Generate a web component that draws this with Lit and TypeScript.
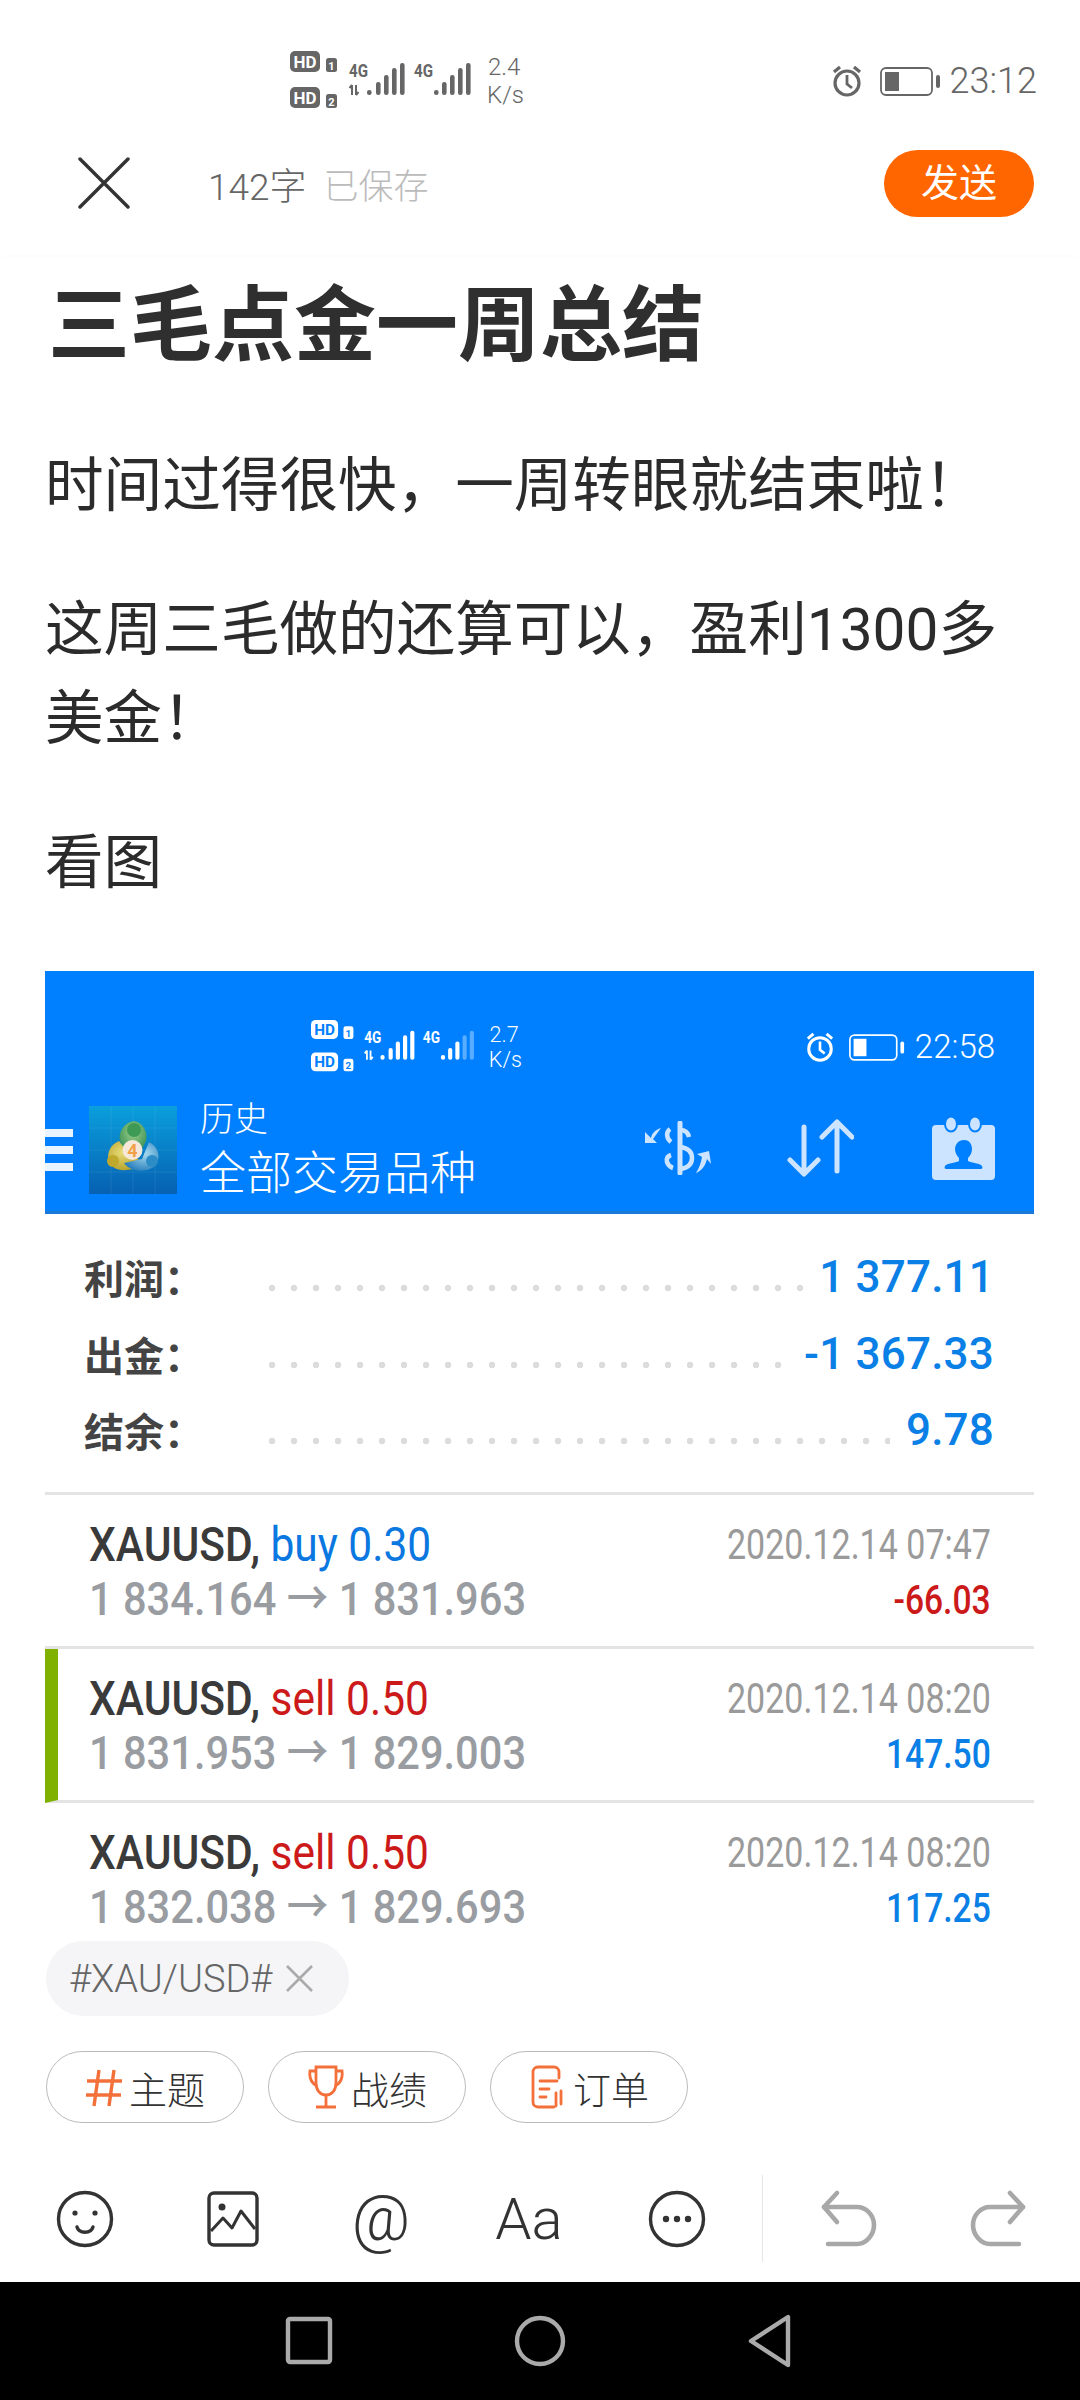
import { LitElement, html, css, svg } from "lit";
import { customElement } from "lit/decorators.js";

const hdBlock = (y: number, n: string, by: number) => svg`
  <rect x="0" y="${y}" width="30" height="21" rx="5" fill="currentColor"/>
  <text x="15" y="${y + 16.5}" text-anchor="middle" font-size="17" font-weight="700" textLength="23" lengthAdjust="spacingAndGlyphs" class="knock">HD</text>
  <rect x="36" y="${by}" width="11" height="14" rx="2.5" fill="currentColor"/>
  <text x="41.5" y="${by + 11.5}" text-anchor="middle" font-size="11" font-weight="700" class="knock">${n}</text>`;

const bars = (xs: number[], dim = 0) => {
  const tops = [40, 32, 25, 18, 13];
  return xs.map(
    (x, i) => svg`<rect x="${x}" y="${tops[i]}" width="4.6" height="${45 - tops[i]}" rx="2.2" fill="currentColor" opacity="${i >= 5 - dim ? 0.35 : 1}"/>`
  );
};

const cluster = (speed: string, dim: number) => svg`
  <svg class="cluster" viewBox="0 0 235 62" aria-hidden="true">
    ${hdBlock(1, "1", 8)}
    ${hdBlock(37, "2", 44)}
    <text x="59" y="27" font-size="18" font-weight="700" textLength="19" lengthAdjust="spacingAndGlyphs" fill="currentColor">4G</text>
    <path d="M62 35v10M59.5 38l2.5-3M66 35v10M66 45l2.5-3" stroke="currentColor" stroke-width="2" fill="none"/>
    ${bars([77, 86, 94, 102, 110])}
    <text x="124" y="27" font-size="18" font-weight="700" textLength="19" lengthAdjust="spacingAndGlyphs" fill="currentColor">4G</text>
    ${bars([144, 152, 160, 168, 176], dim)}
    <text x="198" y="25" font-size="24" font-weight="300" fill="currentColor">${speed}</text>
    <text x="197" y="53" font-size="24" font-weight="300" fill="currentColor">K/s</text>
  </svg>`;

const alarm = () => svg`
  <svg class="alarm" viewBox="0 0 32 34" aria-hidden="true" fill="none" stroke="currentColor">
    <circle cx="16" cy="19" r="12" stroke-width="3.2"/>
    <path d="M16 11v9l5 4" stroke-width="2.8"/>
    <path d="M3 8l6-5M29 8l-6-5" stroke-width="3.2"/>
  </svg>`;

const battery = () => svg`
  <svg class="battery" viewBox="0 0 61 29" aria-hidden="true" fill="none" stroke="currentColor">
    <rect x="1" y="1" width="51" height="27" rx="5" stroke-width="1.8"/>
    <rect x="5" y="5" width="14" height="19" fill="currentColor" stroke="none"/>
    <rect x="56" y="8" width="4" height="13" rx="2" fill="currentColor" stroke="none"/>
  </svg>`;

@customElement("app-root")
export class AppRoot extends LitElement {
  static styles = css`
    :host {
      display: flex;
      flex-direction: column;
      width: 1080px;
      height: 2400px;
      overflow: hidden;
      background: #fff;
      font-family: "Roboto", "Noto Sans CJK SC", sans-serif;
      color: #333;
    }
    .phone-status {
      display: flex;
      align-items: center;
      height: 112px;
      padding: 50px 43px 0 290px;
      box-sizing: border-box;
      color: #666;
      --knock: #fff;
      flex: none;
    }
    .phone-status .cluster { width: 235px; height: 62px; }
    .cluster { display: block; font-family: "Roboto", sans-serif; overflow: visible; }
    .knock { fill: var(--knock); }
    .status-right { display: flex; align-items: center; margin-left: auto; }
    .alarm { width: 32px; height: 34px; margin-right: 17px; }
    .battery { width: 61px; height: 29px; margin-right: 9px; }
    .time { font-weight: 300; font-size: 36px; line-height: 40px; }
    .appbar {
      display: flex;
      align-items: center;
      height: 143px;
      padding: 0 46px 0 78px;
      box-sizing: border-box;
      flex: none;
      padding-bottom: 0;
      box-shadow: 0 3px 6px rgba(0, 0, 0, 0.012);
    }
    .close { width: 52px; height: 52px; margin-right: 78px; margin-top: -1px; }
    .close path { stroke: #333; stroke-width: 3.4; stroke-linecap: round; fill: none; }
    .count { font-size: 37px; font-weight: 300; color: #666; margin-right: 17px; }
    .saved { font-size: 35px; font-weight: 300; color: #bbb; }
    .send {
      margin-left: auto;
      width: 150px;
      height: 67px;
      border-radius: 34px;
      background: #ff6600;
      color: #fff;
      font-size: 38px;
      line-height: 67px;
      text-align: center;
    }
    .main {
      flex: 1;
      min-height: 0;
      overflow: hidden;
      padding: 0 46px 0 45px;
    }
    h1 {
      margin: 30px 0 0 3px;
      font-size: 82px;
      line-height: 82px;
      font-weight: 700;
      color: #2f2f2f;
      letter-spacing: 0;
    }
    p {
      margin: 0 0 55px;
      font-size: 58.6px;
      line-height: 89px;
      color: #2b2b2b;
      font-weight: 400;
    }
    .body { margin-top: 75px; }
    .shot { margin-top: 63px; }
    .shot-head {
      background: #0080ff;
      border-bottom: 3px solid #1a78d8;
      color: #fff;
    }
    .shot-status {
      display: flex;
      align-items: center;
      padding: 48px 39px 0 266px;
      height: 56px;
      box-sizing: content-box;
      --knock: #0080ff;
      margin-bottom: 31px;
    }
    .shot-status .cluster { width: 212px; height: 56px; }
    .shot-status .alarm { width: 30px; height: 32px; margin-right: 14px; }
    .shot-status .battery { width: 56px; height: 27px; margin-right: 10px; }
    .shot-status .time { font-size: 33px; }
    .shot-bar {
      display: flex;
      align-items: center;
      height: 88px;
      padding: 0 39px 17px 0;
    }
    .burger { display: flex; flex-direction: column; gap: 9px; width: 28px; margin-right: 16px; }
    .burger i { display: block; height: 8px; background: #e8f4ff; }
    .logo { width: 88px; height: 88px; margin-right: 23px; flex: none; display: block; }
    .titles { display: flex; flex-direction: column; margin-top: -8px; }
    .t1 { font-size: 34px; line-height: 54px; font-weight: 300; }
    .t2 { font-size: 46px; line-height: 54px; font-weight: 300; }
    .actions { display: flex; align-items: center; margin-left: auto; margin-top: -4px; }
    .ic-dollar { width: 71px; height: 54px; margin-right: 74px; }
    .ic-arrows { width: 67px; height: 58px; margin-right: 78px; }
    .ic-contact { width: 63px; height: 64px; }
    .summary {
      padding: 25px 40px 23px 39px;
      border-bottom: 3px solid #e4e4e4;
    }
    .s-row { display: flex; align-items: center; height: 76.5px; }
    .s-label {
      font-size: 40px;
      font-weight: 700;
      color: #444;
      width: 185px;
      flex: none;
    }
    .leader {
      flex: 1;
      height: 8px;
      margin-top: 22px;
      margin-right: 16px;
      background: radial-gradient(circle at 3px 4px, #dcdcdc 3px, transparent 3.6px) left / 22px 8px repeat-x;
    }
    .s-val { font-size: 44px; font-weight: 500; color: #0a7fe6; letter-spacing: 0.2px; }
    .trade {
      display: flex;
      justify-content: space-between;
      height: 154px;
      box-sizing: border-box;
      padding: 23px 43px 0 44px;
      border-bottom: 3px solid #e4e4e4;
    }
    .trade.mark { border-left: 13px solid #80b000; padding-left: 31px; }
    .tl, .tr { display: flex; flex-direction: column; }
    .tr { align-items: flex-end; }
    .l1, .l2, .d1, .d2 { display: block; white-space: nowrap; line-height: 54px; }
    .l1, .l2 { transform: scaleX(0.885); transform-origin: left center; }
    .d1, .d2 { transform-origin: right center; }
    .l1 { font-size: 48px; font-weight: 400; }
    .sym { font-weight: 500; color: #3a3a3a; }
    .buy { color: #0a78e0; }
    .sell { color: #cc1a1a; }
    .l2 { font-size: 47px; font-weight: 500; color: #999ca1; }
    .d1 { font-size: 42px; color: #9a9a9a; transform: scaleX(0.81); }
    .d2 { font-size: 40px; font-weight: 500; transform: scaleX(0.84); margin-top: 2px; }
    .neg { color: #cc1a1a; }
    .pos { color: #0a7fe6; }
    .foot { flex: none; }
    .tag {
      display: inline-flex;
      align-items: center;
      height: 75px;
      box-sizing: border-box;
      margin-left: 46px;
      padding: 0 36px 0 23px;
      border-radius: 38px;
      background: #f5f5f7;
      font-size: 38px;
      font-weight: 300;
      color: #666;
      vertical-align: top;
    }
    .tag svg { width: 27px; height: 27px; margin-left: 14px; }
    .tag-row { height: 75px; }
    .chips { display: flex; gap: 24px; margin: 35px 0 0 46px; }
    .chip {
      display: flex;
      align-items: center;
      justify-content: center;
      gap: 6px;
      width: 198px;
      height: 72px;
      box-sizing: border-box;
      border: 1px solid #bbb;
      border-radius: 36px;
      font-size: 38px;
      font-weight: 300;
      color: #333;
    }
    .chip svg { width: 38px; height: 46px; flex: none; }
    .tools {
      display: flex;
      align-items: center;
      height: 87px;
      margin: 52px 0 20px 11px;
    }
    .slot { width: 148px; display: flex; justify-content: center; align-items: center; height: 87px; }
    .slot svg { width: 60px; height: 60px; }
    .slot.last { width: 146px; }
    .at { font-size: 64px; font-weight: 300; color: #333; line-height: 60px; }
    .aa { font-size: 58px; font-weight: 300; color: #333; line-height: 60px; }
    .vline { width: 1px; height: 87px; background: #e6e6e6; margin: 0 13px 0 11px; }
    .nav {
      flex: none;
      height: 118px;
      background: #000;
      position: relative;
    }
    .nav-in { display: flex; justify-content: flex-start; align-items: center; height: 118px; padding-left: 285px; }
    .nav svg { display: block; }
  `;

  private trade(
    side: string, cls: string, l2a: string, l2b: string,
    date: string, pnl: string, pcls: string, mark = false
  ) {
    return html`<div class="trade ${mark ? "mark" : ""}">
      <div class="tl">
        <span class="l1"><span class="sym">XAUUSD,</span> <span class="${cls}">${side}</span></span>
        <span class="l2">${l2a} → ${l2b}</span>
      </div>
      <div class="tr">
        <span class="d1">${date}</span>
        <span class="d2 ${pcls}">${pnl}</span>
      </div>
    </div>`;
  }

  render() {
    return html`
      <div class="phone-status">
        ${cluster("2.4", 0)}
        <div class="status-right">${alarm()}${battery()}<span class="time">23:12</span></div>
      </div>
      <div class="appbar">
        <svg class="close" viewBox="0 0 52 52"><path d="M2 2l48 48M50 2L2 50"/></svg>
        <span class="count">142字</span><span class="saved">已保存</span>
        <span class="send">发送</span>
      </div>
      <div class="main">
        <h1>三毛点金一周总结</h1>
        <div class="body">
          <p>时间过得很快，一周转眼就结束啦！</p>
          <p>这周三毛做的还算可以，盈利1300多<br />美金！</p>
          <p>看图</p>
        </div>
        <div class="shot">
          <div class="shot-head">
            <div class="shot-status">
              ${cluster("2.7", 2)}
              <div class="status-right">${alarm()}${battery()}<span class="time">22:58</span></div>
            </div>
            <div class="shot-bar">
              <div class="burger"><i></i><i></i><i></i></div>
              <svg class="logo" viewBox="0 0 88 88" aria-hidden="true">
                <defs>
                  <linearGradient id="tile" x1="0" y1="0" x2="0" y2="1">
                    <stop offset="0" stop-color="#0a9fdc"/>
                    <stop offset="1" stop-color="#0660b2"/>
                  </linearGradient>
                  <radialGradient id="gr" cx=".5" cy=".35" r=".7"><stop offset="0" stop-color="#9fd08a"/><stop offset="1" stop-color="#2e8a50"/></radialGradient>
                  <radialGradient id="ye" cx=".4" cy=".4" r=".7"><stop offset="0" stop-color="#e8dc78"/><stop offset="1" stop-color="#b09a22"/></radialGradient>
                  <radialGradient id="bl" cx=".6" cy=".4" r=".7"><stop offset="0" stop-color="#a8dcf0"/><stop offset="1" stop-color="#1f78b8"/></radialGradient>
                </defs>
                <rect width="88" height="88" fill="url(#tile)"/>
                <path d="M22 0v88M44 0v88M66 0v88M0 22h88M0 44h88M0 66h88" stroke="#ffffff" stroke-opacity=".07" stroke-width="1"/>
                <path d="M45 15c10 2 14 12 12 20l-6 12H37l-6-12c-2-8 3-18 14-20z" fill="url(#gr)"/>
                <path d="M30 35c-8 3-13 12-10 20 2 7 10 10 17 9 7 0 13-3 17-8l-14-8z" fill="url(#ye)"/>
                <path d="M60 36c8 4 12 13 8 21-4 7-13 9-22 7-5-1-9-4-11-7l18-4z" fill="url(#bl)"/>
                <circle cx="45" cy="24" r="7" fill="#3f9a55"/>
                <circle cx="24" cy="55" r="6" fill="#bfa92c"/>
                <circle cx="63" cy="55" r="6" fill="#2c8cc6"/>
                <circle cx="43.5" cy="44" r="10" fill="#f6e8d8"/>
                <text x="43.5" y="50.5" text-anchor="middle" font-size="18" font-weight="700" fill="#f0a14a" font-family="Roboto, sans-serif">4</text>
              </svg>
              <div class="titles"><span class="t1">历史</span><span class="t2">全部交易品种</span></div>
              <div class="actions">
                <svg class="ic-dollar" viewBox="0 0 71 54" aria-hidden="true" fill="none" stroke="#cce4ff">
                  <path d="M38 2v50" stroke-width="5" stroke-linecap="round"/>
                  <path d="M47 16c-1-5-5-7-9-7M28 8c-4 3-4 9 1 13" stroke-width="4.5"/>
                  <path d="M29 34c-3 1-5 3-4 7 1 3 3 5 6 6M38 26c8 1 12 5 12 11s-4 10-12 11" stroke-width="4.5"/>
                  <path d="M19 7C13 9 10 12 9 17l-6-6 0 11 12 0-4-4" fill="#cce4ff" stroke="none"/>
                  <path d="M54 52c5-2 9-6 11-14l4 5-2-13-12 3 5 3c-1 6-3 11-6 16z" fill="#cce4ff" stroke="none"/>
                </svg>
                <svg class="ic-arrows" viewBox="0 0 67 58" aria-hidden="true" fill="none" stroke="#cce4ff" stroke-width="5" stroke-linecap="round" stroke-linejoin="round">
                  <path d="M17 8v46M3 41l14 14 14-14"/>
                  <path d="M50 52V3M35 18L50 3l15 15"/>
                </svg>
                <svg class="ic-contact" viewBox="0 0 63 64" aria-hidden="true">
                  <rect x="0" y="9" width="63" height="55" rx="4" fill="#cce4ff"/>
                  <ellipse cx="19" cy="8" rx="6" ry="7.5" fill="#cce4ff" stroke="#0080ff" stroke-width="2"/>
                  <ellipse cx="43" cy="8" rx="6" ry="7.5" fill="#cce4ff" stroke="#0080ff" stroke-width="2"/>
                  <path d="M32 24c6 0 8 5 8 9 0 4-2 7-4 9v3c4 2 12 2 14 5 1 2 0 3-1 3H14c-1 0-2-1-1-3 2-3 10-3 14-5v-3c-2-2-4-5-4-9 0-4 3-9 9-9z" fill="#0080ff"/>
                </svg>
              </div>
            </div>
          </div>
          <div class="summary">
            <div class="s-row"><span class="s-label">利润：</span><span class="leader"></span><span class="s-val">1 377.11</span></div>
            <div class="s-row"><span class="s-label">出金：</span><span class="leader"></span><span class="s-val">-1 367.33</span></div>
            <div class="s-row"><span class="s-label">结余：</span><span class="leader"></span><span class="s-val">9.78</span></div>
          </div>
          ${this.trade("buy 0.30", "buy", "1 834.164", "1 831.963", "2020.12.14 07:47", "-66.03", "neg")}
          ${this.trade("sell 0.50", "sell", "1 831.953", "1 829.003", "2020.12.14 08:20", "147.50", "pos", true)}
          ${this.trade("sell 0.50", "sell", "1 832.038", "1 829.693", "2020.12.14 08:20", "117.25", "pos")}
        </div>
      </div>
      <div class="foot">
        <div class="tag-row">
          <span class="tag">#XAU/USD#<svg viewBox="0 0 27 27" fill="none" stroke="#aaa" stroke-width="2.6"><path d="M1 1l25 25M26 1L1 26"/></svg></span>
        </div>
        <div class="chips">
          <span class="chip">
            <svg viewBox="0 0 38 46" fill="none" stroke="#f4703a" stroke-width="3.4"><path d="M14 6L9 42M29 6l-5 36M2 17h35M1 31h35"/></svg>主题
          </span>
          <span class="chip">
            <svg viewBox="0 0 38 46" fill="none" stroke="#f4703a" stroke-width="2.8"><path d="M9 3h20v16c0 7-4 12-10 12S9 26 9 19z"/><path d="M9 7H3c-1 7 1 12 7 15M29 7h6c1 7-1 12-7 15M19 31v11M9 43h20"/></svg>战绩
          </span>
          <span class="chip">
            <svg viewBox="0 0 38 46" fill="none" stroke="#f4703a" stroke-width="2.8" stroke-linecap="round"><path d="M30 14V8c0-3-2-5-5-5H9C6 3 4 5 4 8v30c0 3 2 5 5 5h16"/><path d="M11 17h17M11 25h9M11 33h6M27 29v13M32 27v13"/></svg>订单
          </span>
        </div>
        <div class="tools">
          <div class="slot">
            <svg viewBox="0 0 60 60" fill="none" stroke="#333" stroke-width="3.4"><circle cx="30" cy="30" r="26.5"/><circle cx="20" cy="24" r="2.6" fill="#333" stroke="none"/><circle cx="40" cy="24" r="2.6" fill="#333" stroke="none"/><path d="M22 38c2 7 14 7 16 0" stroke-linecap="round"/></svg>
          </div>
          <div class="slot">
            <svg viewBox="0 0 60 60" fill="none" stroke="#333" stroke-width="3.4" stroke-linejoin="round"><rect x="6" y="4" width="48" height="52" rx="5"/><circle cx="19" cy="18" r="3.5" fill="#333" stroke="none"/><path d="M8 42l12-13 9 10 9-17 14 18" stroke-width="3"/></svg>
          </div>
          <div class="slot"><span class="at">@</span></div>
          <div class="slot"><span class="aa">Aa</span></div>
          <div class="slot">
            <svg viewBox="0 0 60 60" fill="none" stroke="#333" stroke-width="3.4"><circle cx="30" cy="30" r="26.5"/><circle cx="19" cy="30" r="3.2" fill="#333" stroke="none"/><circle cx="30" cy="30" r="3.2" fill="#333" stroke="none"/><circle cx="41" cy="30" r="3.2" fill="#333" stroke="none"/></svg>
          </div>
          <div class="vline"></div>
          <div class="slot">
            <svg viewBox="0 0 60 60" fill="none" stroke="#a8a8a8" stroke-width="4.6" stroke-linecap="round" stroke-linejoin="round"><path d="M17 4L4 18l13 15"/><path d="M4 18h33c9 0 17 8 17 18s-8 19-17 19H8"/></svg>
          </div>
          <div class="slot last">
            <svg viewBox="0 0 60 60" fill="none" stroke="#a8a8a8" stroke-width="4.6" stroke-linecap="round" stroke-linejoin="round"><path d="M43 4l13 14-13 15"/><path d="M56 18H23C14 18 6 26 6 36s8 19 17 19h29"/></svg>
          </div>
        </div>
      </div>
      <div class="nav">
        <div class="nav-in">
          <svg width="48" height="50" viewBox="0 0 48 50" fill="none" stroke="#aaa" stroke-width="4.4" stroke-linejoin="round"><rect x="3" y="3" width="42" height="43" rx="2"/></svg>
          <svg width="52" height="54" viewBox="0 0 52 54" fill="none" stroke="#aaa" stroke-width="4.4" style="margin-left:181px"><circle cx="26" cy="27" r="23"/></svg>
          <svg width="46" height="54" viewBox="0 0 46 54" fill="none" stroke="#aaa" stroke-width="4.4" stroke-linejoin="round" style="margin-left:181px"><path d="M41 3v48L4 27z"/></svg>
        </div>
      </div>
    `;
  }
}
